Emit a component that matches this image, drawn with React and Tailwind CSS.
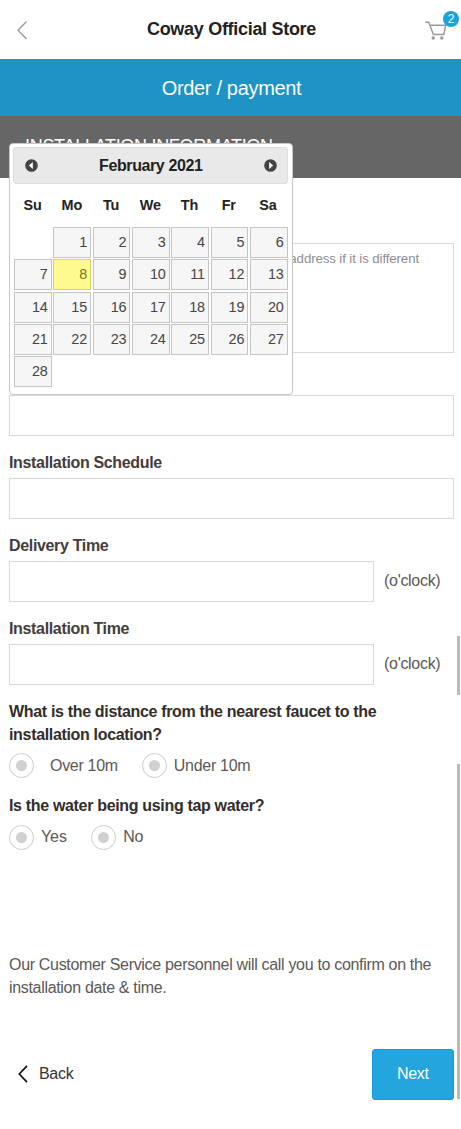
const weekdays = ["Su", "Mo", "Tu", "We", "Th", "Fr", "Sa"];
const days = Array.from({ length: 28 }, (_, i) => i + 1);

const Header = () => {
    return (
        <header className="flex h-[59px] items-center justify-between pl-4 pr-[3px]">
            <svg className="h-5 w-[33px]" viewBox="0 0 33 20" fill="none" stroke="#999" strokeWidth="1.3">
                <path d="M10.5 1.5 L2 10.3 L10.5 19" />
            </svg>
            <h1 className="flex-1 pr-[11px] text-center text-[18px] font-bold tracking-[-0.3px] text-[#222]">Coway Official Store</h1>
            <div className="relative h-8 w-[33px]">
                {/* Cart */}
                <svg className="absolute left-0 top-[6px]" width="24" height="22" viewBox="0 0 24 22" fill="none" stroke="#999" strokeWidth="1.4">
                    <path d="M0.3 2.3 H3.8 L8.3 14.5 H18.8 L20.7 5.2 H5" />
                    <circle cx="8.2" cy="18" r="1.7" fill="#999" stroke="none" />
                    <circle cx="16.8" cy="18" r="1.7" fill="#999" stroke="none" />
                </svg>
                <span className="absolute -right-px top-[-3px] flex h-4 w-4 items-center justify-center rounded-full bg-[#1ba1dc] text-[12px] leading-4 text-white">
                    2
                </span>
            </div>
        </header>
    );
};

const MonthArrow = ({ flip }) => (
    <svg width="13" height="13" viewBox="0 0 13 13" className={flip ? "rotate-180" : ""}>
        <circle cx="6.5" cy="6.5" r="6.3" fill="#444" />
        <path d="M7.8 3 V10 L3.9 6.5 Z" fill="#fff" />
    </svg>
);

const Calendar = () => {
    return (
        <div className="absolute left-[9px] top-[143px] h-[252px] w-[283.5px] rounded-[4px] border border-[#c5c5c5] bg-white pl-[3px] pr-[4px] pt-[3px]">
            <div className="flex h-[37px] items-center justify-between rounded-[3px] border border-[#ddd] bg-[#e9e9e9] pl-[11px] pr-[10px]">
                <MonthArrow />
                <span className="pt-px text-[16px] font-bold tracking-[-0.4px] text-[#222]">February 2021</span>
                <MonthArrow flip />
            </div>
            <div className="mt-[10px] grid grid-cols-7 text-center text-[14.4px] font-bold leading-[22px] tracking-[-0.2px] text-[#222]">
                {weekdays.map((day) => (
                    <span key={day}>{day}</span>
                ))}
            </div>
            <div className="mt-[11px] grid grid-cols-7 gap-x-[1.7px] gap-y-[1.3px] pl-[1px]">
                <span></span>
                {days.map((day) => (
                    <span
                        key={day}
                        className={
                            day === 8
                                ? "h-[31px] border border-[#dad55e] bg-[#fffa90] pr-[3px] text-right text-[14.4px] leading-[29px] tracking-[-0.2px] text-[#777620]"
                                : "h-[31px] border border-[#c5c5c5] bg-[#f6f6f6] pr-[3px] text-right text-[14.4px] leading-[29px] tracking-[-0.2px] text-[#454545]"
                        }
                    >
                        {day}
                    </span>
                ))}
            </div>
        </div>
    );
};

const Label = ({ children }) => (
    <label className="block pb-[4px] pt-[15.6px] text-[16px] font-bold leading-[22.5px] tracking-[-0.34px] text-[#443c3a]">{children}</label>
);

const TimeField = ({ label }) => (
    <div>
        <Label>{label}</Label>
        <div className="flex items-center gap-[10px]">
            <input className="h-[41px] w-[365px] border border-[#d9d9d9]" />
            <span className="pb-[1.5px] tracking-[-0.3px]">(o'clock)</span>
        </div>
    </div>
);

const Radio = () => (
    <span className="flex h-[25px] w-[25px] items-center justify-center rounded-full border border-[#ccc]">
        <span className="h-[11px] w-[11px] rounded-full bg-[#d0d0d0]"></span>
    </span>
);

const App = () => {
    return (
        <div className="relative h-[1129px] w-[461px] overflow-hidden bg-white font-['Liberation_Sans',Arial,sans-serif] text-[16px] leading-[22.5px] text-[#5c5856]">
            <Header />
            <div className="flex h-[57px] items-center justify-center bg-[#1e93c6] pl-[2px] pt-px text-[20px] tracking-[-0.33px] text-white">
                Order / payment
            </div>
            <div className="flex h-[62px] items-center bg-[#666] pb-0.5 pl-[25px] text-[18px] tracking-[-0.3px] text-white">
                INSTALLATION INFORMATION
            </div>

            <main className="pl-[9px] pr-[7px] pt-[65px]">
                <div className="h-[110px] border border-[#d9d9d9] pr-[34px] pt-1 text-right text-[13.3px] tracking-[-0.12px] text-[#8e8e8e]">
                    address if it is different
                </div>
                <input className="mt-[42px] block h-[41px] w-full border border-[#d9d9d9]" />
                <Label>Installation Schedule</Label>
                <input className="block h-[41px] w-full border border-[#d9d9d9]" />
                <TimeField label="Delivery Time" />
                <TimeField label="Installation Time" />

                <p className="mt-[16.2px] font-bold tracking-[-0.33px] text-[#332d2c]">
                    What is the distance from the nearest faucet to the installation location?
                </p>
                <div className="mt-[7px] flex items-center">
                    <Radio />
                    <span className="ml-4 tracking-[-0.3px]">Over 10m</span>
                    <span className="ml-6"><Radio /></span>
                    <span className="ml-[7px] tracking-[-0.3px]">Under 10m</span>
                </div>
                <p className="mt-[17px] font-bold tracking-[-0.33px] text-[#332d2c]">Is the water being using tap water?</p>
                <div className="mt-[7px] flex items-center">
                    <Radio />
                    <span className="ml-[7px] tracking-[-0.1px]">Yes</span>
                    <span className="ml-[24.5px]"><Radio /></span>
                    <span className="ml-[7px] tracking-[-0.3px]">No</span>
                </div>

                <p className="mt-[104.5px] tracking-[-0.32px]">
                    Our Customer Service personnel will call you to confirm on the installation date & time.
                </p>
                <div className="mt-[49.2px] flex items-center justify-between">
                    <button className="flex items-center gap-[11px] pl-[9px] tracking-[-0.3px] text-[#333]">
                        <svg width="10" height="18" viewBox="0 0 10 18" fill="none" stroke="#111" strokeWidth="1.7">
                            <path d="M9 0.8 L1.3 9 L9 17.2" />
                        </svg>
                        Back
                    </button>
                    <button className="h-[51px] w-[82.5px] rounded-[3px] border border-[#139bdb] bg-[#25a5de] tracking-[-0.3px] text-white">Next</button>
                </div>
            </main>

            <Calendar />

            {/* Scrollbars */}
            <div className="absolute left-[457px] top-[636px] h-[59px] w-[3px] bg-[#bbb]"></div>
            <div className="absolute left-[457px] top-[764px] h-[335px] w-[3px] bg-[#bbb]"></div>
        </div>
    );
};

export default App;
